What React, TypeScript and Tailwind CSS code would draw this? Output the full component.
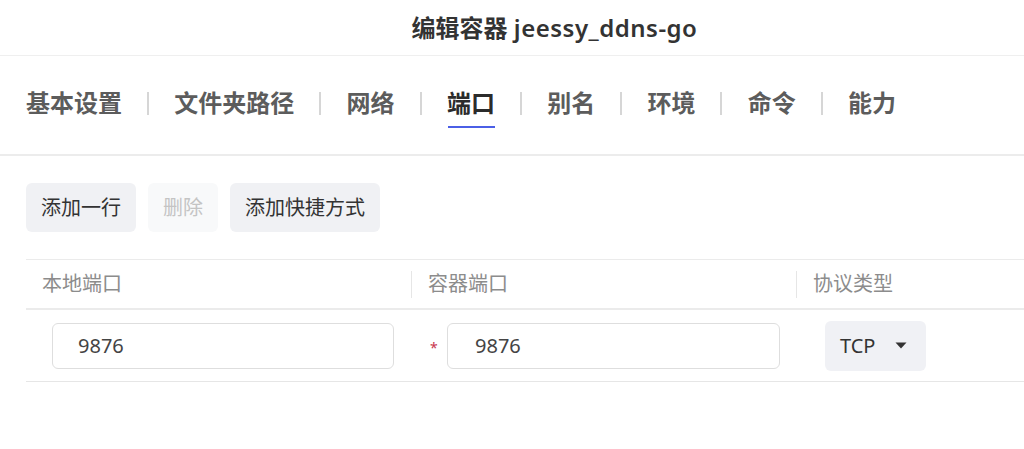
import { useState } from 'react';

const TABS = ['基本设置', '文件夹路径', '网络', '端口', '别名', '环境', '命令', '能力'];

type PortRow = { local: string; container: string; protocol: string };

export default function App() {
  const [activeTab, setActiveTab] = useState('端口');
  const [rows] = useState<PortRow[]>([{ local: '9876', container: '9876', protocol: 'TCP' }]);

  return (
    <div className="w-[1024px] h-[449px] overflow-hidden bg-white font-['Noto_Sans','Noto_Sans_CJK_SC',sans-serif]">
      {/* --- Header --- */}
      <div className="h-[56px] border-b border-[#efefef] flex items-center justify-center pl-[85px]">
        <h1 className="text-[24px] font-semibold text-[#333] leading-none">
          编辑容器 <span className="tracking-[0.5px]">jeessy_ddns-go</span>
        </h1>
      </div>

      {/* --- Tabs --- */}
      <div className="h-[100px] border-b-2 border-[#ececec] flex items-start px-[26px] pt-[35px]">
        {TABS.map((tab, i) => (
          <div key={tab} className="flex items-start">
            {i > 0 && <div className="w-[2px] h-[23px] mt-px ml-[25px] mr-[25.3px] bg-[#d6d6d6]" />}
            <button
              onClick={() => setActiveTab(tab)}
              className="flex flex-col items-stretch cursor-pointer"
            >
              <span
                className={`text-[24px] leading-[24px] font-bold ${
                  activeTab === tab ? 'text-[#2b2b2b]' : 'text-[#5c5c5c]'
                }`}
              >
                {tab}
              </span>
              <span
                className={`h-[2px] mt-[11px] ml-px ${
                  activeTab === tab ? 'bg-[#4b5fe6]' : 'bg-transparent'
                }`}
              />
            </button>
          </div>
        ))}
      </div>

      {/* --- Toolbar --- */}
      <div className="flex gap-[12px] px-[26px] mt-[27px]">
        <button className="h-[49px] px-[15px] rounded-[6px] bg-[#f0f1f4] text-[20px] text-[#333]">添加一行</button>
        <button disabled className="h-[49px] px-[15px] rounded-[6px] bg-[#f8f9fa] text-[20px] text-[#c4c4c4]">删除</button>
        <button className="h-[49px] px-[15px] rounded-[6px] bg-[#f0f1f4] text-[20px] text-[#333]">添加快捷方式</button>
      </div>

      {/* --- Port table --- */}
      <div className="ml-[26px] mt-[27px] border-t border-[#ebebeb]">
        <div className="h-[50px] flex items-center border-b-2 border-[#ebebeb] text-[20px] text-[#8c8c8c]">
          <div className="w-[385px] pl-[16px]">本地端口</div>
          <div className="w-[385px] flex items-center">
            <div className="w-px h-[27px] bg-[#e6e6e6]" />
            <span className="ml-[16px]">容器端口</span>
          </div>
          <div className="flex items-center">
            <div className="w-px h-[27px] bg-[#e6e6e6]" />
            <span className="ml-[16px]">协议类型</span>
          </div>
        </div>

        {rows.map((row, i) => (
          <div key={i} className="h-[72px] flex items-center border-b border-[#e6e6e6]">
            <div className="w-[385px] pl-[26px] pr-[17px]">
              <input
                defaultValue={row.local}
                className="w-full h-[46px] border border-[#dedede] rounded-[6px] pl-[25px] text-[20px] text-[#444] outline-none"
              />
            </div>
            <div className="w-[385px] flex items-center pl-[19px] pr-[16px]">
              <span className="w-[17px] text-[14px] text-[#c8364e] pt-[4px]">*</span>
              <input
                defaultValue={row.container}
                className="flex-1 h-[46px] border border-[#dedede] rounded-[6px] pl-[27px] text-[20px] text-[#444] outline-none"
              />
            </div>
            <div className="pl-[29px]">
              <button className="w-[101px] h-[50px] rounded-[6px] bg-[#f0f1f5] flex items-center pl-[15px] text-[20px] text-[#333]">
                {row.protocol}
                <svg width="12" height="7" viewBox="0 0 12 7" className="ml-[20px]">
                  <path d="M0.5 0.5 L11.5 0.5 L6 6.5 Z" fill="#333" />
                </svg>
              </button>
            </div>
          </div>
        ))}
      </div>
    </div>
  );
}
